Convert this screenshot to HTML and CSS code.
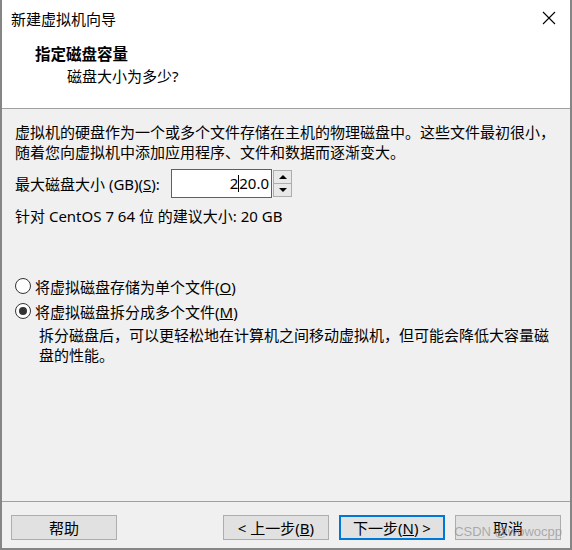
FILE: index.html
```html
<!DOCTYPE html>
<html lang="zh-CN">
<head>
  <meta charset="UTF-8" />
  <title>新建虚拟机向导</title>
  <link rel="stylesheet" href="styles.css">
</head>
<body>

  <div class="window">
    <!-- White header -->
    <div class="top">
      <div class="titlebar">
        <span class="title">新建虚拟机向导</span>
        <svg class="close" width="14" height="14" viewBox="0 0 14 14">
          <path d="M1 1 L13 13 M13 1 L1 13" stroke="#000" stroke-width="1.1" fill="none" />
        </svg>
      </div>
      <div class="heading">指定磁盘容量</div>
      <div class="subheading">磁盘大小为多少?</div>
    </div>

    <!-- Body -->
    <div class="body">
      <p class="intro">虚拟机的硬盘作为一个或多个文件存储在主机的物理磁盘中。这些文件最初很小，<br>随着您向虚拟机中添加应用程序、文件和数据而逐渐变大。</p>

      <div class="size-row">
        <label>最大磁盘大小 (GB)(<u>S</u>):</label>
        <div class="spin-input">2<span class="caret"></span>20.0</div>
        <div class="spin-btns">
          <div class="spin-btn"><span class="arrow up"></span></div>
          <div class="spin-btn"><span class="arrow down"></span></div>
        </div>
      </div>

      <p class="hint">针对 CentOS 7 64 位 的建议大小: 20 GB</p>

      <div class="options">
        <div class="radio-row">
          <span class="radio"></span>
          <span>将虚拟磁盘存储为单个文件(<u>O</u>)</span>
        </div>
        <div class="radio-row">
          <span class="radio checked"></span>
          <span>将虚拟磁盘拆分成多个文件(<u>M</u>)</span>
        </div>
        <p class="desc">拆分磁盘后，可以更轻松地在计算机之间移动虚拟机，但可能会降低大容量磁<br>盘的性能。</p>
      </div>
    </div>

    <!-- Footer buttons -->
    <div class="footer">
      <button class="btn">帮助</button>
      <div class="spacer"></div>
      <button class="btn">&lt; 上一步(<u>B</u>)</button>
      <button class="btn default">下一步(<u>N</u>) &gt;</button>
      <button class="btn">取消</button>
      <span class="watermark">CSDN @wowocpp</span>
    </div>
  </div>

</body>
</html>
```

FILE: styles.css
```css
body, p {
  margin: 0;
  padding: 0;
}

body {
  font-family: "Noto Sans", "Noto Sans CJK SC", sans-serif;
  font-size: 15px;
  color: #000;
  background: #fff;
}

.window {
  width: 572px;
  height: 550px;
  box-sizing: border-box;
  border-left: 2px solid #858585;
  border-right: 2px solid #858585;
  border-bottom: 2px solid #858585;
  background: #f0f0f0;
  display: flex;
  flex-direction: column;
}

.top {
  background: #fff;
  height: 108px;
  border-bottom: 1px solid #a0a0a0;
}

.titlebar {
  height: 36px;
  display: flex;
  align-items: center;
  justify-content: space-between;
  padding: 0 14px 0 9px;
}

.close {
  display: block;
}

.heading {
  margin-top: 7px;
  padding-left: 33px;
  font-weight: bold;
  font-size: 15.5px;
  line-height: 22px;
}

.subheading {
  padding-left: 65px;
  line-height: 22px;
}

.body {
  padding: 13px 0 0 13px;
}

.intro {
  line-height: 20px;
}

.size-row {
  display: flex;
  align-items: center;
  margin-top: 7px;
  height: 29px;
}

.size-row label {
  width: 156px;
}

.spin-input {
  box-sizing: border-box;
  width: 101px;
  height: 29px;
  border: 1px solid #0078d7;
  background: #fff;
  text-align: right;
  line-height: 27px;
  padding-right: 2px;
}

.caret {
  display: inline-block;
  width: 1px;
  height: 17px;
  background: #000;
  vertical-align: -3px;
}

.spin-btns {
  margin-left: 1px;
  width: 19px;
  height: 27px;
  border: 1px solid #adadad;
  display: flex;
  flex-direction: column;
  box-sizing: border-box;
  background: #e8e8e8;
}

.spin-btn {
  flex: 1;
  display: flex;
  align-items: center;
  justify-content: center;
}

.spin-btn + .spin-btn {
  border-top: 1px solid #adadad;
}

.arrow {
  width: 0;
  height: 0;
  border-left: 4px solid transparent;
  border-right: 4px solid transparent;
}

.arrow.up {
  border-bottom: 4px solid #000;
}

.arrow.down {
  border-top: 4px solid #000;
}

.hint {
  margin-top: 8px;
  line-height: 20px;
}

.options {
  margin-top: 50px;
}

.radio-row {
  display: flex;
  align-items: center;
  gap: 4px;
  height: 20px;
  margin-bottom: 5px;
}

.radio {
  box-sizing: border-box;
  width: 16px;
  height: 16px;
  border: 1px solid #333;
  border-radius: 50%;
  background: #fff;
  position: relative;
}

.radio.checked::after {
  content: "";
  position: absolute;
  left: 3px;
  top: 3px;
  width: 8px;
  height: 8px;
  border-radius: 50%;
  background: #333;
}

.desc {
  padding-left: 24px;
  margin-top: 1px;
  line-height: 19.5px;
}

.footer {
  margin-top: auto;
  border-top: 1px solid #a0a0a0;
  height: 47px;
  box-sizing: border-box;
  display: flex;
  align-items: flex-start;
  padding: 13px 9px 0 9px;
  gap: 10px;
  position: relative;
}

.spacer {
  flex: 1;
}

.btn {
  box-sizing: border-box;
  width: 106px;
  height: 25px;
  border: 1px solid #adadad;
  background: #e1e1e1;
  font-family: inherit;
  font-size: 15px;
  padding: 0;
  color: #000;
}

.btn.default {
  border: 2px solid #0078d7;
}

.watermark {
  position: absolute;
  right: 8px;
  top: 22px;
  font-family: "Liberation Sans", sans-serif;
  font-size: 13px;
  color: rgba(150, 150, 150, 0.75);
}
```
